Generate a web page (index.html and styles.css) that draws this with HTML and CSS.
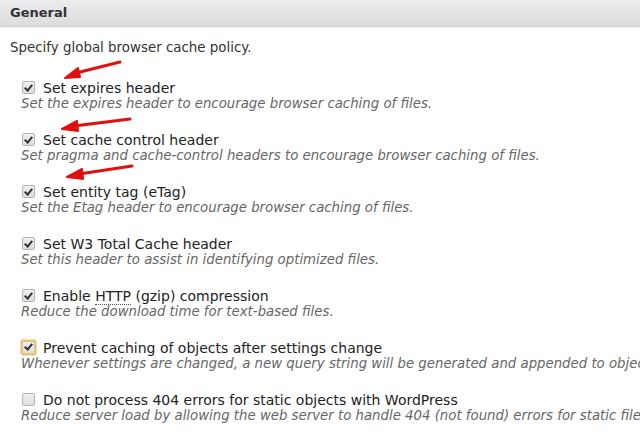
FILE: index.html
```html
<!DOCTYPE html>
<html lang="en">
<head>
    <meta charset="UTF-8">
    <title>Browser Cache - General</title>
    <link rel="stylesheet" href="styles.css">
</head>
<body>
    <div class="postbox">
        <h3 class="box-title">General</h3>

        <div class="inside">
            <p class="intro">Specify global browser cache policy.</p>

            <ul class="options">
                <li class="option">
                    <label><span class="check checked"></span>Set expires header</label>
                    <span class="desc">Set the expires header to encourage browser caching of files.</span>
                </li>
                <li class="option">
                    <label><span class="check checked"></span>Set cache control header</label>
                    <span class="desc">Set pragma and cache-control headers to encourage browser caching of files.</span>
                </li>
                <li class="option">
                    <label><span class="check checked"></span>Set entity tag (eTag)</label>
                    <span class="desc">Set the Etag header to encourage browser caching of files.</span>
                </li>
                <li class="option">
                    <label><span class="check checked"></span>Set W3 Total Cache header</label>
                    <span class="desc">Set this header to assist in identifying optimized files.</span>
                </li>
                <li class="option">
                    <label><span class="check checked"></span>Enable <abbr title="Hypertext Transfer Protocol">HTTP</abbr> (gzip) compression</label>
                    <span class="desc">Reduce the download time for text-based files.</span>
                </li>
                <li class="option">
                    <label><span class="check checked focused"></span>Prevent caching of objects after settings change</label>
                    <span class="desc">Whenever settings are changed, a new query string will be generated and appended to objects</span>
                </li>
                <li class="option">
                    <label><span class="check"></span>Do not process 404 errors for static objects with WordPress</label>
                    <span class="desc">Reduce server load by allowing the web server to handle 404 (not found) errors for static files.</span>
                </li>
            </ul>
        </div>

        <!-- hand-drawn annotation arrows -->
        <svg class="arrows" width="640" height="200" viewBox="0 0 640 200">
            <g fill="#e01010" stroke="#e01010" stroke-linecap="round" stroke-linejoin="round">
                <path d="M120 62 L76 73" stroke-width="3" fill="none"/>
                <path d="M65 78 L78 68 L80 77 Z" stroke-width="2"/>
                <path d="M130 119 L74 126" stroke-width="3" fill="none"/>
                <path d="M62 129 L77 121 L78 131 Z" stroke-width="2"/>
                <path d="M132 166 L79 174" stroke-width="3" fill="none"/>
                <path d="M67 177 L82 169 L83 179 Z" stroke-width="2"/>
            </g>
        </svg>
    </div>
</body>
</html>
```

FILE: styles.css
```css
* {
    box-sizing: border-box;
    margin: 0;
    padding: 0;
}

body {
    font-family: "DejaVu Sans", Verdana, sans-serif;
    color: #333;
    background-color: #fff;
    overflow: hidden;
}

.postbox {
    position: relative;
    width: 640px;
    overflow: hidden;
}

.box-title {
    height: 27px;
    line-height: 26px;
    padding-left: 10px;
    font-size: 13px;
    font-weight: bold;
    color: #333;
    background: linear-gradient(to bottom, #ececec, #dcdcdc);
    border-bottom: 1px solid #cfcfcf;
    box-shadow: 0 2px 0 #f6f6f6;
}

.inside {
    padding: 12px 0 0 10px;
}

.intro {
    font-size: 13.4px;
    line-height: 18px;
    margin-bottom: 22px;
}

.options {
    list-style: none;
    padding-left: 11px;
}

.option {
    margin-bottom: 20px;
    white-space: nowrap;
}

.option label {
    display: block;
    font-size: 14px;
    line-height: 18px;
    color: #222;
}

.check {
    display: inline-block;
    vertical-align: -1px;
    width: 13px;
    height: 13px;
    margin: 0 8px 0 1px;
    border: 1px solid #b4b4b4;
    border-radius: 2px;
    background: linear-gradient(to bottom, #f0f0f0, #dedede);
    position: relative;
}

.check.checked::after {
    content: "";
    position: absolute;
    left: 3px;
    top: 1px;
    width: 3px;
    height: 6px;
    border: solid #333;
    border-width: 0 2px 2px 0;
    transform: rotate(40deg);
}

.check.focused {
    border: 2px solid #e6c27a;
    box-shadow: 0 0 0 1px #f3dfb0;
    width: 15px;
    height: 15px;
    vertical-align: -2px;
    margin-left: 0;
    margin-right: 7px;
}

.check.focused::after {
    left: 3px;
    top: 0;
}

abbr {
    text-decoration: none;
    border-bottom: 1px dotted #555;
}

.desc {
    display: block;
    font-size: 13.3px;
    line-height: 14px;
    font-style: italic;
    color: #666;
}

.arrows {
    position: absolute;
    left: 0;
    top: 0;
    pointer-events: none;
}
```
